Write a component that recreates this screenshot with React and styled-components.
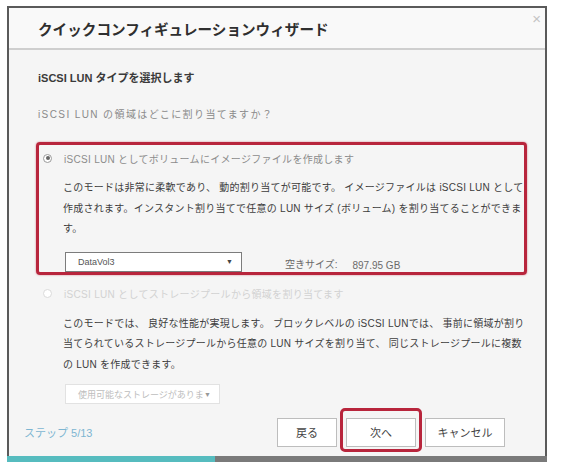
import React from 'react';
import styled, { createGlobalStyle, css } from 'styled-components';

const GlobalStyle = createGlobalStyle`
  body {
    margin: 0;
    background: #ffffff;
    font-family: "Liberation Sans", "Noto Sans CJK JP", sans-serif;
  }
`;

const Page = styled.div`
  width: 562px;
  height: 462px;
  padding: 6px 0 0 7px;
  box-sizing: border-box;
  overflow: hidden;
`;

const Dialog = styled.div`
  width: 540px;
  height: 456px;
  box-sizing: border-box;
  border: 2px solid #5a5a5a;
  border-bottom: none;
  background: #f5f5f5;
  display: flex;
  flex-direction: column;
`;

const Header = styled.div`
  height: 40px;
  flex-shrink: 0;
  display: flex;
  justify-content: space-between;
  align-items: center;
  padding: 0 4px 0 29px;
  background: #f9f9f9;
  border-bottom: 2px solid #cfcfcf;
`;

const Title = styled.h1`
  margin: 0;
  font-size: 14.6px;
  font-weight: 700;
  color: #2f2f2f;
`;

const Close = styled.span`
  align-self: flex-start;
  margin-top: 3px;
  font-size: 15px;
  line-height: 15px;
  color: #c4c4c4;
`;

const Body = styled.div`
  flex: 1;
  padding: 0 18px 0 29px;
`;

const Subtitle = styled.div`
  margin-top: 20px;
  font-size: 11px;
  line-height: 16px;
  font-weight: 700;
  color: #3a3a3a;
`;

const Question = styled.div`
  margin-top: 22px;
  font-size: 10px;
  line-height: 14px;
  letter-spacing: 1.4px;
  color: #8a8a8a;
`;

const Option = styled.div`
  margin-left: -2px;
  padding: 5px 0 0 4px;
  border: 3px solid transparent;
  border-radius: 4px;

  ${({ $marked }) =>
    $marked &&
    css`
      margin-top: 20px;
      border-color: #b8253c;
      box-shadow: 0 0 2px rgba(184, 37, 60, 0.6);
    `}

  ${({ $marked }) => !$marked && css`margin-top: 3px;`}
`;

const RadioRow = styled.div`
  display: flex;
  align-items: center;
  height: 16px;
  gap: 12px;
  font-size: 10px;
  letter-spacing: 0.3px;
  color: ${({ $disabled }) => ($disabled ? '#d2d2d2' : '#8c8c8c')};
`;

const Radio = styled.span`
  width: 9px;
  height: 9px;
  box-sizing: border-box;
  border-radius: 50%;
  border: 1px solid ${({ $disabled }) => ($disabled ? '#dadada' : '#9a9a9a')};
  background: #fff;
  display: flex;
  align-items: center;
  justify-content: center;

  &::after {
    content: '';
    display: ${({ $checked }) => ($checked ? 'block' : 'none')};
    width: 4px;
    height: 4px;
    border-radius: 50%;
    background: #666;
  }
`;

const Description = styled.p`
  margin: 12px 0 0 20px;
  font-size: 10px;
  line-height: 20.5px;
  letter-spacing: 0.25px;
  white-space: nowrap;
  color: #3d3d3d;
`;

const SelectRow = styled.div`
  display: flex;
  align-items: flex-end;
  margin: ${({ $top }) => $top}px 0 0 22px;
`;

const Select = styled.div`
  width: ${({ $width }) => $width}px;
  height: 20px;
  box-sizing: border-box;
  display: flex;
  align-items: center;
  justify-content: space-between;
  padding: 0 8px 0 12px;
  background: #fff;
  border: 1px solid ${({ $disabled }) => ($disabled ? '#e2e2e2' : '#7c7c7c')};
  font-size: 9px;
  color: ${({ $disabled }) => ($disabled ? '#bdbdbd' : '#555')};

  &::after {
    content: '▼';
    font-size: 7px;
    color: ${({ $disabled }) => ($disabled ? '#999' : '#444')};
  }
`;

const SizeLabel = styled.span`
  margin: 0 0 1px 43px;
  font-size: 10px;
  color: #6a6a6a;
`;

const SizeValue = styled.span`
  margin: 0 0 1px 15px;
  font-size: 10px;
  color: #6a6a6a;
`;

const Footer = styled.div`
  height: 48px;
  flex-shrink: 0;
  display: flex;
  align-items: center;
  justify-content: space-between;
  padding: 0 40px 0 15px;
`;

const Step = styled.span`
  font-size: 11px;
  color: #7db6d2;
`;

const Buttons = styled.div`
  display: flex;
  align-items: center;
  gap: 9px;
`;

const Button = styled.button`
  width: ${({ $width }) => $width}px;
  height: 29px;
  padding: 0;
  background: #fff;
  border: 1px solid #bdbdbd;
  font-family: inherit;
  font-size: 11px;
  color: #444;
`;

const Highlight = styled.span`
  display: flex;
  margin: -10px -6px -5px;
  padding: 7px 3px 2px;
  border: 3px solid #b8253c;
  border-radius: 5px;
`;

const Progress = styled.div`
  height: 6px;
  flex-shrink: 0;
  margin: 0 -2px;
  background: #7a7a7a;
  display: flex;
`;

const ProgressFill = styled.div`
  background: #56bcbf;
`;

const step = 5;
const total = 13;

const App = () => {
  return (
    <Page>
      <GlobalStyle />
      <Dialog>
        <Header>
          <Title>クイックコンフィギュレーションウィザード</Title>
          <Close>×</Close>
        </Header>
        <Body>
          <Subtitle>iSCSI LUN タイプを選択します</Subtitle>
          <Question>iSCSI LUN の領域はどこに割り当てますか？</Question>

          <Option $marked>
            <RadioRow>
              <Radio $checked />
              iSCSI LUN としてボリュームにイメージファイルを作成します
            </RadioRow>
            <Description>
              このモードは非常に柔軟であり、 動的割り当てが可能です。 イメージファイルは iSCSI LUN として
              <br />
              作成されます。インスタント割り当てで任意の LUN サイズ (ボリューム) を割り当てることができま
              <br />
              す。
            </Description>
            <SelectRow $top={12}>
              <Select $width={177}>DataVol3</Select>
              <SizeLabel>空きサイズ:</SizeLabel>
              <SizeValue>897.95 GB</SizeValue>
            </SelectRow>
          </Option>

          <Option>
            <RadioRow $disabled>
              <Radio $disabled />
              iSCSI LUN としてストレージプールから領域を割り当てます
            </RadioRow>
            <Description>
              このモードでは、 良好な性能が実現します。 ブロックレベルの iSCSI LUNでは、 事前に領域が割り
              <br />
              当てられているストレージプールから任意の LUN サイズを割り当て、 同じストレージプールに複数
              <br />
              の LUN を作成できます。
            </Description>
            <SelectRow $top={9}>
              <Select $width={155} $disabled>
                使用可能なストレージがありま
              </Select>
            </SelectRow>
          </Option>
        </Body>
        <Footer>
          <Step>ステップ {step}/{total}</Step>
          <Buttons>
            <Button $width={60}>戻る</Button>
            <Highlight>
              <Button $width={70}>次へ</Button>
            </Highlight>
            <Button $width={80}>キャンセル</Button>
          </Buttons>
        </Footer>
        <Progress>
          <ProgressFill style={{ width: `${(step / total) * 100}%` }} />
        </Progress>
      </Dialog>
    </Page>
  );
};

export default App;
